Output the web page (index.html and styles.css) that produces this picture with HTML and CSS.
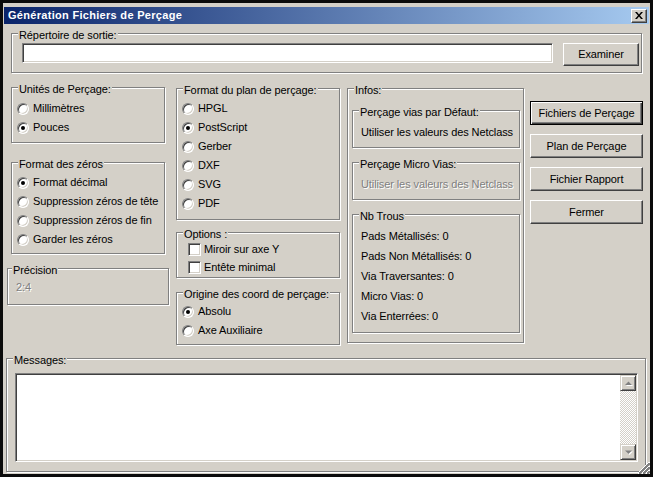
FILE: index.html
```html
<!DOCTYPE html>
<html lang="fr">
<head>
<meta charset="utf-8">
<title>Génération Fichiers de Perçage</title>
<link rel="stylesheet" href="styles.css">
</head>
<body>
<div class="window">
  <div class="titlebar">
    <span class="title">Génération Fichiers de Perçage</span>
    <button class="close" aria-label="Fermer">
      <svg width="8" height="7" viewBox="0 0 8 7"><path d="M0 0h2l2 2.4L6 0h2L5 3.5 8 7H6L4 4.6 2 7H0l3-3.5z" fill="#000"/></svg>
    </button>
  </div>
  <div class="content">
    <div class="group g-dir">
      <span class="glabel">Répertoire de sortie:</span>
      <div class="sunken field"></div>
      <button class="btn btn-exam">Examiner</button>
    </div>

    <div class="middle">
      <div class="col col1">
        <div class="group g-units">
          <span class="glabel">Unités de Perçage:</span>
          <div class="opt"><span class="radio"></span>Millimètres</div>
          <div class="opt"><span class="radio on"></span>Pouces</div>
        </div>
        <div class="group g-zeros">
          <span class="glabel">Format des zéros</span>
          <div class="opt"><span class="radio on"></span>Format décimal</div>
          <div class="opt"><span class="radio"></span>Suppression zéros de tête</div>
          <div class="opt"><span class="radio"></span>Suppression zéros de fin</div>
          <div class="opt"><span class="radio"></span>Garder les zéros</div>
        </div>
        <div class="group g-prec">
          <span class="glabel glabel-near">Précision</span>
          <div class="disabled">2:4</div>
        </div>
      </div>

      <div class="col col2">
        <div class="group g-plan">
          <span class="glabel">Format du plan de perçage:</span>
          <div class="opt"><span class="radio"></span>HPGL</div>
          <div class="opt"><span class="radio on"></span>PostScript</div>
          <div class="opt"><span class="radio"></span>Gerber</div>
          <div class="opt"><span class="radio"></span>DXF</div>
          <div class="opt"><span class="radio"></span>SVG</div>
          <div class="opt"><span class="radio"></span>PDF</div>
        </div>
        <div class="group g-opts">
          <span class="glabel">Options :</span>
          <div class="opt opt-check"><span class="check"></span>Miroir sur axe Y</div>
          <div class="opt opt-check"><span class="check"></span>Entête minimal</div>
        </div>
        <div class="group g-orig">
          <span class="glabel">Origine des coord de perçage:</span>
          <div class="opt"><span class="radio on"></span>Absolu</div>
          <div class="opt"><span class="radio"></span>Axe Auxiliaire</div>
        </div>
      </div>

      <div class="col col3">
        <div class="group g-infos">
          <span class="glabel">Infos:</span>
          <div class="group g-sub">
            <span class="glabel">Perçage vias par Défaut:</span>
            <div>Utiliser les valeurs des Netclass</div>
          </div>
          <div class="group g-sub g-micro">
            <span class="glabel">Perçage Micro Vias:</span>
            <div class="disabled">Utiliser les valeurs des Netclass</div>
          </div>
          <div class="group g-trous">
            <span class="glabel">Nb Trous</span>
            <div class="info">Pads Métallisés: 0</div>
            <div class="info">Pads Non Métallisés: 0</div>
            <div class="info">Via Traversantes: 0</div>
            <div class="info">Micro Vias: 0</div>
            <div class="info">Via Enterrées: 0</div>
          </div>
        </div>
      </div>

      <div class="col col4">
        <button class="btn btn-side btn-default">Fichiers de Perçage</button>
        <button class="btn btn-side">Plan de Perçage</button>
        <button class="btn btn-side">Fichier Rapport</button>
        <button class="btn btn-side">Fermer</button>
      </div>
    </div>

    <div class="group g-msg">
      <span class="glabel">Messages:</span>
      <div class="sunken textarea">
        <div class="scrollbar">
          <div class="sbtn"><svg width="7" height="5" viewBox="0 0 7 5"><path d="M3.5 0.5L0 4h7z" fill="#808080"/></svg></div>
          <div class="track"></div>
          <div class="sbtn"><svg width="7" height="5" viewBox="0 0 7 5"><path d="M0 0.5h7L3.5 4z" fill="#808080"/></svg></div>
        </div>
      </div>
    </div>
  </div>
  <svg class="grip" width="12" height="12" viewBox="0 0 12 12" shape-rendering="crispEdges">
    <g stroke-width="1">
      <path d="M0 11.5L11.5 0" stroke="#fff"/>
      <path d="M1 11.5L11.5 1M2 11.5L11.5 2" stroke="#808080"/>
      <path d="M4 11.5L11.5 4" stroke="#fff"/>
      <path d="M5 11.5L11.5 5M6 11.5L11.5 6" stroke="#808080"/>
      <path d="M8 11.5L11.5 8" stroke="#fff"/>
      <path d="M9 11.5L11.5 9M10 11.5L11.5 10" stroke="#808080"/>
    </g>
  </svg>
</div>
</body>
</html>
```

FILE: styles.css
```css
* { box-sizing: border-box; }
html, body { margin: 0; padding: 0; }
body {
  width: 653px; height: 477px; overflow: hidden; background: #000;
  font-family: "Liberation Sans", Arial, sans-serif;
  font-size: 11px; line-height: 13px; color: #000;
  letter-spacing: -0.1px;
}
button { font: inherit; color: inherit; margin: 0; letter-spacing: inherit; }

.window {
  position: relative; width: 653px; height: 477px;
  border: 3px solid #0b0b0b; padding: 4px 1px 1px 1px;
  background: #d4d0c8;
}

.titlebar {
  height: 17px; display: flex; align-items: center; justify-content: space-between;
  padding: 0 2px 0 4px;
  background: linear-gradient(to right, #0a246a, #a6caf0);
}
.title { color: #fff; font-weight: bold; letter-spacing: 0.3px; }
.close {
  width: 16px; height: 14px; padding: 0;
  display: flex; align-items: center; justify-content: center;
  background: #d4d0c8; border: 1px solid;
  border-color: #fff #404040 #404040 #fff;
  box-shadow: inset -1px -1px #808080;
}

.content { padding-top: 9px; }

.group {
  position: relative;
  border: 1px solid #808080;
  box-shadow: inset 1px 1px #fff, 1px 1px #fff;
}
.glabel {
  position: absolute; top: -5px; left: 6px;
  padding: 0 1px; background: #d4d0c8; white-space: nowrap;
}
.glabel-near { left: 4px; }

.sunken {
  background: #fff; border: 1px solid;
  border-color: #808080 #fff #fff #808080;
  box-shadow: inset 1px 1px #404040, inset -1px -1px #d4d0c8;
}

.btn {
  background: #d4d0c8; border: 1px solid;
  border-color: #fff #404040 #404040 #fff;
  box-shadow: inset -1px -1px #808080;
  padding: 0; text-align: center;
}
.btn-default {
  border-color: #000;
  box-shadow: inset 1px 1px #fff, inset -1px -1px #404040, inset -2px -2px #808080;
}

/* Répertoire */
.g-dir {
  margin: 0 7px; height: 40px;
  display: flex; align-items: flex-start; gap: 10px;
  padding: 9px 2px 0 10px;
}
.field { width: 531px; height: 20px; }
.btn-exam { width: 76px; height: 23px; }

/* Middle */
.middle { display: flex; align-items: flex-start; margin-top: 14px; padding-left: 3px; }
.col { display: flex; flex-direction: column; }
.col1 { width: 162px; }
.col2 { width: 164px; margin-left: 7px; margin-top: 1px; }
.col3 { width: 177px; margin-left: 7px; margin-top: 1px; }
.col4 { width: 113px; margin-left: 6px; margin-top: 14px; gap: 9px; }

.opt { height: 19px; display: flex; align-items: center; white-space: nowrap; }
.opt-check { height: 18px; }

.radio {
  position: relative; flex: none;
  width: 12px; height: 12px; margin-right: 4px; border-radius: 50%;
  background: #fff; border: 1px solid;
  border-color: #808080 #fff #fff #808080;
  box-shadow: inset 1px 1px #404040, inset -1px -1px #d4d0c8;
}
.radio.on::after {
  content: ""; position: absolute; left: 3px; top: 3px;
  width: 4px; height: 4px; border-radius: 50%; background: #000;
}
.check {
  flex: none; width: 13px; height: 13px; margin-right: 3px;
  background: #fff; border: 1px solid;
  border-color: #808080 #fff #fff #808080;
  box-shadow: inset 1px 1px #404040, inset -1px -1px #d4d0c8;
}

.g-units { margin: 0 4px; height: 56px; padding: 11px 0 0 5px; }
.g-zeros { margin: 19px 4px 0; height: 92px; padding: 10px 0 0 5px; }
.g-prec { margin-top: 14px; height: 37px; padding: 12px 0 0 8px; }

.g-plan { height: 132px; padding: 10px 0 0 5px; }
.g-opts { margin-top: 12px; height: 46px; padding: 7px 0 0 11px; }
.g-orig { margin-top: 14px; height: 53px; padding: 9px 0 0 5px; }

.g-infos { height: 255px; padding: 21px 3px 0 4px; }
.g-sub { height: 38px; padding: 15px 0 0 8px; }
.g-micro { margin-top: 14px; }
.g-trous { margin-top: 14px; height: 119px; padding: 11px 0 0 8px; }
.info { height: 20px; display: flex; align-items: center; }

.disabled { color: #808080; text-shadow: 1px 1px 0 #fff; }

.btn-side { height: 24px; width: 113px; }

/* Messages */
.g-msg { margin: 13px 3px 0 2px; height: 114px; padding: 14px 7px 0 8px; }
.textarea { height: 89px; padding: 1px; display: flex; justify-content: flex-end; }
.scrollbar { width: 16px; display: flex; flex-direction: column; }
.sbtn {
  height: 16px; flex: none; display: flex; align-items: center; justify-content: center;
  background: #d4d0c8; border: 1px solid;
  border-color: #d4d0c8 #404040 #404040 #d4d0c8;
  box-shadow: inset 1px 1px #fff, inset -1px -1px #808080;
}
.sbtn svg { filter: drop-shadow(1px 1px 0 #fff); }
.track {
  flex: 1;
  background-image: repeating-conic-gradient(#fff 0 25%, #d4d0c8 0 50%);
  background-size: 2px 2px;
}

.grip { position: absolute; right: 0; bottom: 0; }
```
